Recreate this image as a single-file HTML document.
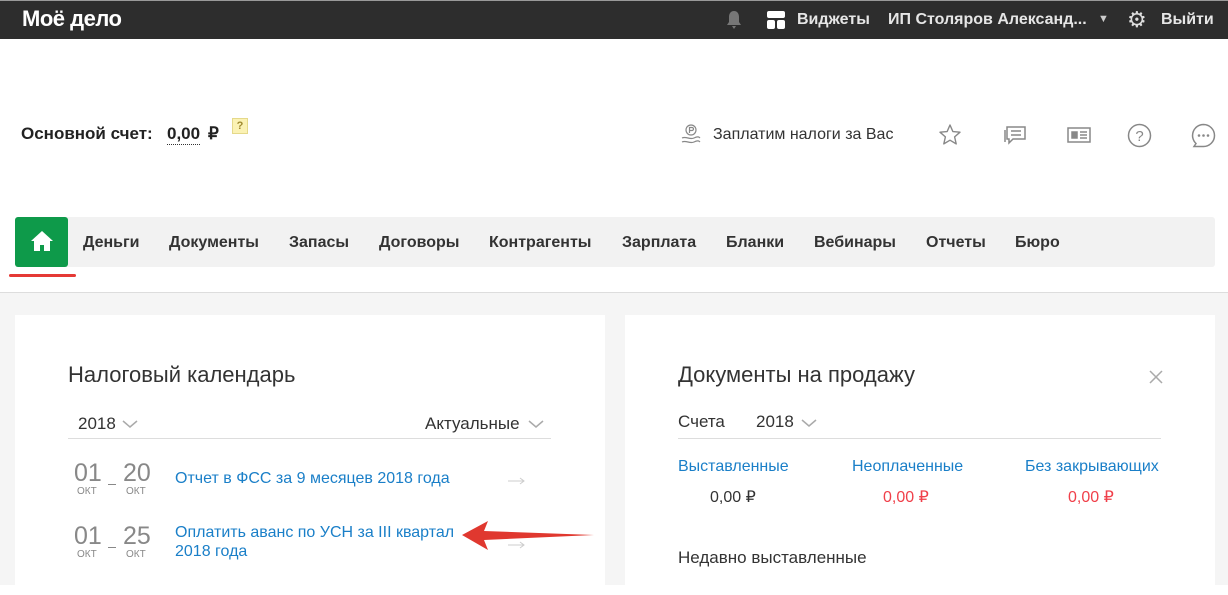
<!DOCTYPE html>
<html><head><meta charset="utf-8"><style>
*{margin:0;padding:0;box-sizing:border-box}
body{width:1228px;height:585px;overflow:hidden;position:relative;font-family:"Liberation Sans",sans-serif;background:#fff;color:#333}
.a{position:absolute;white-space:nowrap}
.top{position:absolute;left:0;top:0;width:1228px;height:39px;background:#2d2d2d;border-top:1px solid #999}
.tw{color:#e6e6e6;font-weight:bold;font-size:16px}
.nav{position:absolute;left:15px;top:217px;width:1200px;height:50px;background:#f2f2f2;border-radius:3px}
.nav span{position:absolute;top:17px;font-weight:bold;font-size:16px;color:#333}
.gray{position:absolute;left:0;top:292px;width:1228px;height:293px;background:#f5f5f5;border-top:1px solid #ddd}
.card{position:absolute;top:315px;height:280px;background:#fff}
.blue{color:#1a7fc8}
.dn{font-size:25px;color:#888}
.ok{font-size:10px;color:#888}
.chev{position:absolute}
</style></head><body>
<div class="top"></div>
<div class="a" style="left:22px;top:6px;color:#fff;font-weight:bold;font-size:22px;letter-spacing:-0.5px">Моё дело</div>
<svg class="a" style="left:725px;top:10px" width="18" height="20" viewBox="0 0 18 20"><path d="M9 1c-3.5 0-5 3-5 6v5l-2 3h14l-2-3V7c0-3-1.5-6-5-6z M7 16h4l-2 3z" fill="#777"/></svg>
<svg class="a" style="left:767px;top:11px" width="18" height="18" viewBox="0 0 18 18"><rect x="0" y="0" width="18" height="7" rx="2" fill="#fff"/><rect x="0" y="9" width="8" height="9" rx="2" fill="#fff"/><rect x="10" y="9" width="8" height="9" rx="2" fill="#fff"/></svg>
<div class="a tw" style="left:797px;top:11px">Виджеты</div>
<div class="a tw" style="left:888px;top:11px">ИП Столяров Александ...</div>
<div class="a" style="left:1098px;top:13px;color:#ccc;font-size:11px">▼</div>
<div class="a" style="left:1127px;top:7px;color:#ddd;font-size:22px">⚙</div>
<div class="a tw" style="left:1161px;top:11px">Выйти</div>

<div class="a" style="left:21px;top:124px;font-weight:bold;font-size:17px;color:#222">Основной счет:</div>
<div class="a" style="left:167px;top:124px;font-weight:bold;font-size:17px;color:#222;border-bottom:1px dotted #333">0,00</div>
<div class="a" style="left:208px;top:124px;font-weight:bold;font-size:17px;color:#222">₽</div>
<div class="a" style="left:232px;top:118px;width:16px;height:16px;background:#fbf2b4;border:1px solid #e5d98a;font-size:11px;color:#a08a30;text-align:center;line-height:14px;font-weight:bold">?</div>

<svg class="a" style="left:680px;top:124px" width="22" height="24" viewBox="0 0 22 24" fill="none" stroke="#888" stroke-width="1.2"><circle cx="11" cy="6" r="5"/><path d="M9.5 9V3.5h2.5a1.5 1.5 0 010 3H9.5"/><path d="M2 14c4-2 8 2 12 0s5-1 6 0M2 18c4-2 8 2 12 0s5-1 6 0"/></svg>
<div class="a" style="left:713px;top:126px;font-size:16px;color:#333">Заплатим налоги за Вас</div>
<svg class="a" style="left:938px;top:123px" width="24" height="24" viewBox="0 0 24 24"><path d="M12 2l2.9 6.6 7.1.6-5.4 4.7 1.6 7-6.2-3.7-6.2 3.7 1.6-7L2 9.2l7.1-.6z" fill="none" stroke="#888" stroke-width="1.4" stroke-linejoin="round"/></svg>
<svg class="a" style="left:1003px;top:124px" width="24" height="22" viewBox="0 0 24 22" fill="none" stroke="#888" stroke-width="1.5"><path d="M4 3h18v12H10l-4 4v-4H4z"/><path d="M8 7h10M8 11h10"/><path d="M2 6v12"/></svg>
<svg class="a" style="left:1067px;top:127px" width="24" height="16" viewBox="0 0 24 16" fill="none" stroke="#888" stroke-width="1.5"><rect x="1" y="1" width="22" height="14"/><rect x="5" y="5" width="5" height="6" fill="#888"/><path d="M13 5h7M13 8h7M13 11h7"/></svg>
<svg class="a" style="left:1127px;top:123px" width="25" height="25" viewBox="0 0 25 25"><circle cx="12.5" cy="12.5" r="11" fill="none" stroke="#888" stroke-width="1.5"/><text x="12.5" y="18" text-anchor="middle" font-size="15" fill="#888" font-family="Liberation Sans">?</text></svg>
<svg class="a" style="left:1191px;top:123px" width="25" height="25" viewBox="0 0 25 25"><path d="M12.5 1.5a11 11 0 110 22H3l2-3a11 11 0 017.5-19z" fill="none" stroke="#888" stroke-width="1.5"/><circle cx="8" cy="12.5" r="1.3" fill="#888"/><circle cx="12.5" cy="12.5" r="1.3" fill="#888"/><circle cx="17" cy="12.5" r="1.3" fill="#888"/></svg>

<div class="nav">
<div style="position:absolute;left:0;top:0;width:53px;height:50px;background:#0e9a4a;border-radius:3px"></div>
<svg style="position:absolute;left:15px;top:13px" width="24" height="22" viewBox="0 0 24 22"><path d="M12 1L1 11h3v10h6v-6h4v6h6V11h3z" fill="#fff"/></svg>
<span style="left:68px">Деньги</span><span style="left:154px">Документы</span><span style="left:274px">Запасы</span><span style="left:364px">Договоры</span><span style="left:474px">Контрагенты</span><span style="left:607px">Зарплата</span><span style="left:711px">Бланки</span><span style="left:799px">Вебинары</span><span style="left:911px">Отчеты</span><span style="left:1000px">Бюро</span>
</div>
<div class="a" style="left:9px;top:274px;width:67px;height:3px;background:#e53935;border-radius:2px"></div>

<div class="gray"></div>
<div class="card" style="left:15px;width:590px"></div>
<div class="card" style="left:625px;width:590px"></div>

<div class="a" style="left:68px;top:362px;font-size:22px;color:#333">Налоговый календарь</div>
<div class="a" style="left:78px;top:414px;font-size:17px">2018</div>
<svg class="chev" style="left:122px;top:419px" width="16" height="10" viewBox="0 0 16 10"><path d="M1 2l7 6 7-6" fill="none" stroke="#aaa" stroke-width="1.5"/></svg>
<div class="a" style="left:425px;top:414px;font-size:17px">Актуальные</div>
<svg class="chev" style="left:528px;top:419px" width="16" height="10" viewBox="0 0 16 10"><path d="M1 2l7 6 7-6" fill="none" stroke="#aaa" stroke-width="1.5"/></svg>
<div class="a" style="left:68px;top:438px;width:483px;height:1px;background:#ddd"></div>

<div class="a dn" style="left:74px;top:459px">01</div><div class="a" style="left:108px;top:484px;width:8px;height:1px;background:#888"></div><div class="a dn" style="left:123px;top:459px">20</div>
<div class="a ok" style="left:77px;top:486px">ОКТ</div><div class="a ok" style="left:126px;top:486px">ОКТ</div>
<div class="a blue" style="left:175px;top:470px;font-size:16px">Отчет в ФСС за 9 месяцев 2018 года</div>
<svg class="a" style="left:508px;top:477px" width="17" height="8" viewBox="0 0 17 8"><path d="M0 4h16M12 1l4 3-4 3" fill="none" stroke="#ccc" stroke-width="1"/></svg>

<div class="a dn" style="left:74px;top:522px">01</div><div class="a" style="left:108px;top:547px;width:8px;height:1px;background:#888"></div><div class="a dn" style="left:123px;top:522px">25</div>
<div class="a ok" style="left:77px;top:549px">ОКТ</div><div class="a ok" style="left:126px;top:549px">ОКТ</div>
<div class="a blue" style="left:175px;top:523px;font-size:16px;line-height:19px">Оплатить аванс по УСН за III квартал<br>2018 года</div>
<svg class="a" style="left:508px;top:541px" width="17" height="8" viewBox="0 0 17 8"><path d="M0 4h16M12 1l4 3-4 3" fill="none" stroke="#ccc" stroke-width="1"/></svg>
<svg class="a" style="left:458px;top:518px" width="142" height="34" viewBox="0 0 142 34"><path d="M4 17L30 3l-4 10 110 4-110 5 4 10z" fill="#e0382f"/></svg>

<div class="a" style="left:678px;top:362px;font-size:22px;color:#333">Документы на продажу</div>
<svg class="a" style="left:1149px;top:370px" width="14" height="14" viewBox="0 0 14 14"><path d="M1 1l12 12M13 1L1 13" stroke="#aaa" stroke-width="1.5"/></svg>
<div class="a" style="left:678px;top:412px;font-size:17px">Счета</div>
<div class="a" style="left:756px;top:412px;font-size:17px">2018</div>
<svg class="chev" style="left:801px;top:418px" width="16" height="10" viewBox="0 0 16 10"><path d="M1 2l7 6 7-6" fill="none" stroke="#aaa" stroke-width="1.5"/></svg>
<div class="a" style="left:678px;top:438px;width:483px;height:1px;background:#ddd"></div>
<div class="a blue" style="left:678px;top:458px;font-size:16px">Выставленные</div>
<div class="a blue" style="left:852px;top:458px;font-size:16px">Неоплаченные</div>
<div class="a blue" style="left:1025px;top:458px;font-size:16px">Без закрывающих</div>
<div class="a" style="left:710px;top:487px;font-size:16px">0,00 ₽</div>
<div class="a" style="left:883px;top:487px;font-size:16px;color:#f0404a">0,00 ₽</div>
<div class="a" style="left:1068px;top:487px;font-size:16px;color:#f0404a">0,00 ₽</div>
<div class="a" style="left:678px;top:548px;font-size:17px">Недавно выставленные</div>
</body></html>
